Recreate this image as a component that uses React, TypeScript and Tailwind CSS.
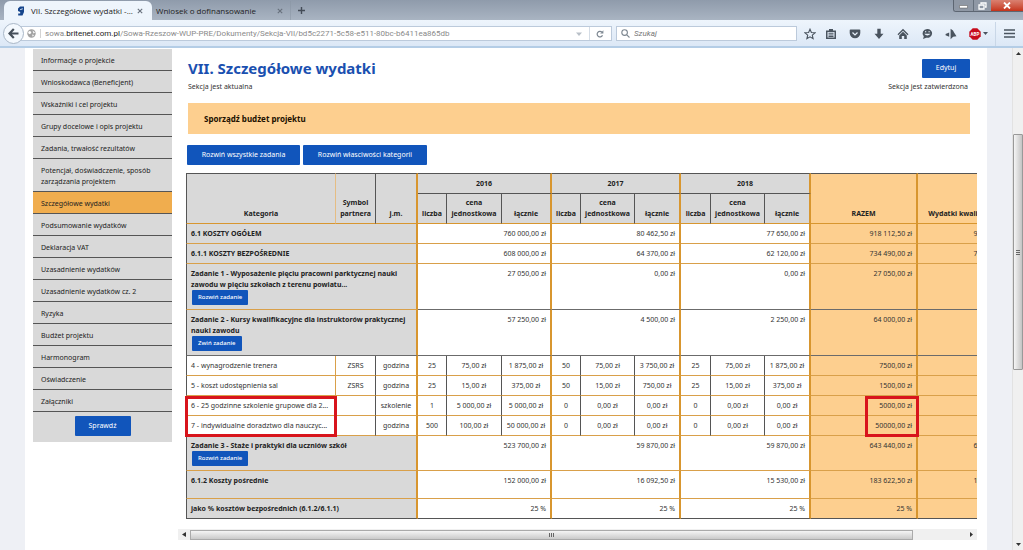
import { ReactNode } from "react"

const sections = [
  "Informacje o projekcie",
  "Wnioskodawca (Beneficjent)",
  "Wskaźniki i cel projektu",
  "Grupy docelowe i opis projektu",
  "Zadania, trwałość rezultatów",
  "Potencjał, doświadczenie, sposób zarządzania projektem",
  "Szczegółowe wydatki",
  "Podsumowanie wydatków",
  "Deklaracja VAT",
  "Uzasadnienie wydatków",
  "Uzasadnienie wydatków cz. 2",
  "Ryzyka",
  "Budżet projektu",
  "Harmonogram",
  "Oświadczenie",
  "Załączniki",
]

const years = ["2016", "2017", "2018"]

type Summary = {
  title: string
  button?: string
  height: string
  totals: string[]
  line: string
  titleLine?: string
}

const summaryTop: Summary[] = [
  { title: "6.1 KOSZTY OGÓŁEM", height: "h-[20px]", totals: ["760 000,00 zł", "80 462,50 zł", "77 650,00 zł", "918 112,50 zł", "918 112,50 zł"], line: "border-b-[#d9a04a]" },
  { title: "6.1.1 KOSZTY BEZPOŚREDNIE", height: "h-[20px]", totals: ["608 000,00 zł", "64 370,00 zł", "62 120,00 zł", "734 490,00 zł", "734 490,00 zł"], line: "border-b-[#d9a04a]" },
  { title: "Zadanie 1 - Wyposażenie pięciu pracowni parktycznej nauki zawodu w pięciu szkołach z terenu powiatu...", button: "Rozwiń zadanie", height: "h-[46px]", totals: ["27 050,00 zł", "0,00 zł", "0,00 zł", "27 050,00 zł", "27 050,00 zł"], line: "border-b-[#6b6b6b]", titleLine: "border-b-[#d9a04a]" },
  { title: "Zadanie 2 - Kursy kwalifikacyjne dla instruktorów praktycznej nauki zawodu", button: "Zwiń zadanie", height: "h-[46px]", totals: ["57 250,00 zł", "4 500,00 zł", "2 250,00 zł", "64 000,00 zł", "64 000,00 zł"], line: "border-b-[#6b6b6b]" },
]

const summaryBottom: Summary[] = [
  { title: "Zadanie 3 - Staże i praktyki dla uczniów szkół", button: "Rozwiń zadanie", height: "h-[35px]", totals: ["523 700,00 zł", "59 870,00 zł", "59 870,00 zł", "643 440,00 zł", "643 440,00 zł"], line: "border-b-[#d9a04a]" },
  { title: "6.1.2 Koszty pośrednie", height: "h-[28px]", totals: ["152 000,00 zł", "16 092,50 zł", "15 530,00 zł", "183 622,50 zł", "183 622,50 zł"], line: "border-b-[#d9a04a]" },
  { title: "jako % kosztów bezpośrednich (6.1.2/6.1.1)", height: "h-[20px]", totals: ["25 %", "25 %", "25 %", "25 %", ""], line: "border-b-[#555]" },
]

const items = [
  { name: "4 - wynagrodzenie trenera", partner: "ZSRS", unit: "godzina", cells: ["25", "75,00 zł", "1 875,00 zł", "50", "75,00 zł", "3 750,00 zł", "25", "75,00 zł", "1 875,00 zł"], total: "7500,00 zł" },
  { name: "5 - koszt udostępnienia sal", partner: "ZSRS", unit: "godzina", cells: ["25", "15,00 zł", "375,00 zł", "50", "15,00 zł", "750,00 zł", "25", "15,00 zł", "375,00 zł"], total: "1500,00 zł" },
  { name: "6 - 25 godzinne szkolenie grupowe dla 2...", partner: "", unit: "szkolenie", cells: ["1", "5 000,00 zł", "5 000,00 zł", "0", "0,00 zł", "0,00 zł", "0", "0,00 zł", "0,00 zł"], total: "5000,00 zł", marked: true },
  { name: "7 - indywidualne doradztwo dla nauczyc...", partner: "", unit: "godzina", cells: ["500", "100,00 zł", "50 000,00 zł", "0", "0,00 zł", "0,00 zł", "0", "0,00 zł", "0,00 zł"], total: "50000,00 zł" },
]

function BlueButton({ children, className = "" }: { children: ReactNode; className?: string }) {
  return (
    <button className={`rounded-[1px] bg-[#1155bb] text-center whitespace-nowrap text-white ${className}`}>
      {children}
    </button>
  )
}

function TabStrip() {
  return (
    <div className="flex h-[20px] items-end bg-gradient-to-b from-[#8f9bab] to-[#a9b4c2] font-['Open_Sans',sans-serif] text-[8px] text-[#222]">
      <div className="ml-[4px] flex h-[19px] w-[148px] items-center rounded-t-[6px] bg-[#eef5fc] pr-[9px] pl-[13px]">
        <svg className="h-[10px] w-[8px] shrink-0" viewBox="0 0 8 10">
          <path d="M3 .5h4v5.5L5.5 9.5H1.2V7.6h2V6L1 5V2.5z" fill="#17468c" />
          <path d="M3.2 3.6l2.6-.8" stroke="#eef5fc" strokeWidth=".9" />
        </svg>
        <span className="ml-[6px] flex-1 whitespace-nowrap">VII. Szczegółowe wydatki -...</span>
        <Cross />
      </div>
      <div className="flex h-[19px] w-[131px] items-center pl-[4px]">
        <span className="flex-1 whitespace-nowrap">Wniosek o dofinansowanie</span>
        <Cross />
      </div>
      <div className="ml-[7px] flex h-[19px] items-center border-l border-[#8893a2]/50 pl-[7px]">
        <svg className="h-[7px] w-[7px]" viewBox="0 0 7 7">
          <path d="M3.5 0v7M0 3.5h7" stroke="#444c57" strokeWidth="1.4" />
        </svg>
      </div>
      <div className="mb-auto ml-auto flex h-[12px] overflow-hidden rounded-bl-[3px] border-b border-l border-[#5d6672]">
        <button aria-label="Minimalizuj" className="flex w-[19px] items-end justify-center bg-[#8f98a5] pb-[2px]">
          <svg className="h-[4px] w-[9px]" viewBox="0 0 9 4">
            <path d="M.5 .5h8v2.5h-8z" fill="#fff" stroke="#555" strokeWidth=".5" />
          </svg>
        </button>
        <button aria-label="Przywróć" className="flex w-[18px] items-center justify-center border-l border-[#66707c] bg-[#8f98a5]">
          <svg className="h-[8px] w-[9px]" viewBox="0 0 9 8">
            <path d="M3 2V1h5v4H7M1 3h5v4H1z" fill="none" stroke="#fff" strokeWidth="1.3" />
          </svg>
        </button>
        <button aria-label="Zamknij" className="flex w-[32px] items-center justify-center bg-gradient-to-b from-[#d98070] to-[#c53219]">
          <svg className="h-[7px] w-[8px]" viewBox="0 0 8 7">
            <path d="M1 .5l6 6M7 .5l-6 6" stroke="#fff" strokeWidth="1.8" />
          </svg>
        </button>
      </div>
    </div>
  )
}

function Cross() {
  return (
    <svg className="h-[6px] w-[6px] shrink-0" viewBox="0 0 6 6">
      <path d="M.8.8l4.4 4.4M5.2.8L.8 5.2" stroke="#67707c" strokeWidth="1.1" />
    </svg>
  )
}

function ToolIcon({ children }: { children: ReactNode }) {
  return (
    <svg className="h-[12px] w-[12px]" viewBox="0 0 12 12" fill="#4a545f">
      {children}
    </svg>
  )
}

function AddressBar() {
  return (
    <div className="relative flex h-[28px] items-center border-b-2 border-[#b4cde6] bg-gradient-to-b from-[#eef5fc] to-[#dce8f6] pt-[1px] font-['Roboto',sans-serif] text-[8px]">
      <button aria-label="Wstecz" className="absolute left-[3px] z-10 flex h-[21px] w-[21px] items-center justify-center rounded-full border border-[#a9b7c7] bg-[#f4f9fe]">
        <svg className="h-[11px] w-[11px]" viewBox="0 0 11 11">
          <path d="M5.8 1L1.5 5.5 5.8 10M2 5.5h8.5" fill="none" stroke="#454f5a" strokeWidth="2.2" />
        </svg>
      </button>
      <div className="ml-[20px] flex h-[15px] flex-1 items-center border border-[#bccadb] bg-white pl-[6px] text-[#8a8a8a]">
        <svg className="h-[9px] w-[9px]" viewBox="0 0 9 9">
          <circle cx="4.5" cy="4.5" r="4.2" fill="#a3a3a3" />
          <path d="M2 2l2 .4.3 1.6-1.6 1.3L1 4zM5.5 1.5L8 3.5 6.5 4.4zM5 5.5l2 .4-1.2 1.8z" fill="#fff" />
        </svg>
        <span className="ml-[4px] h-[9px] w-px bg-[#d3d3d3]" />
        <span className="ml-[4px] flex-1 whitespace-nowrap">
          sowa.<span className="text-[#222]">britenet.com.pl</span>/Sowa-Rzeszow-WUP-PRE/Dokumenty/Sekcja-VII/bd5c2271-5c58-e511-80bc-b6411ea865db
        </span>
        <svg className="h-[4px] w-[6px]" viewBox="0 0 6 4">
          <path d="M0 .5h6L3 4z" fill="#b9c0c8" />
        </svg>
        <span className="ml-[7px] h-[13px] w-px bg-[#d5dde6]" />
        <svg className="mr-[7px] ml-[6px] h-[8px] w-[8px]" viewBox="0 0 8 8">
          <path d="M6.5 5.3A2.8 2.8 0 1 1 6 2.2" fill="none" stroke="#7d8791" strokeWidth="1.2" />
          <path d="M7.4.3v3.2H4.2z" fill="#7d8791" />
        </svg>
      </div>
      <div className="ml-[4px] flex h-[15px] w-[181px] items-center border border-[#bccadb] bg-white pl-[4px]">
        <svg className="h-[9px] w-[9px]" viewBox="0 0 9 9">
          <path d="M5.8 5.8l2.7 2.7M6.4 3.6a2.8 2.8 0 1 1-5.6 0 2.8 2.8 0 0 1 5.6 0z" fill="none" stroke="#7c8690" strokeWidth="1.1" />
        </svg>
        <input aria-label="Szukaj" placeholder="Szukaj" className="ml-[4px] min-w-0 flex-1 italic placeholder:text-[#777]" />
      </div>
      <div className="ml-[7px] flex items-center">
        <ToolIcon>
          <path d="M6 1.2l1.4 3.3 3.6.3-2.7 2.4.8 3.5L6 8.8l-3.1 1.9.8-3.5L1 4.8l3.6-.3z" fill="none" stroke="#4a545f" strokeWidth="1.1" />
        </ToolIcon>
        <div className="ml-[9px] flex gap-[12px]">
          <ToolIcon>
            <path d="M4 1h4v1.5h3V11H1V2.5h3zM2.5 4v5.5h7V4z" fillRule="evenodd" />
            <path d="M3.5 4.8h5v1h-5zM3.5 6.5h5v1h-5zM3.5 8.1h5v.8h-5z" />
          </ToolIcon>
          <ToolIcon>
            <path d="M1.5 1.5h9q.8 0 .8.8V5A5.3 5.3 0 0 1 .7 5V2.3q0-.8.8-.8z" />
            <path d="M3.5 4.5L6 6.9l2.5-2.4" fill="none" stroke="#e6eff9" strokeWidth="1.3" />
          </ToolIcon>
          <ToolIcon>
            <path d="M4.3.8h3.4v5h2.8L6 11 1.5 5.8h2.8z" />
          </ToolIcon>
          <ToolIcon>
            <path d="M6 .8L11.5 6.3l-.9.9L6 2.8 1.4 7.2l-.9-.9zM6 3.8l3.8 3.6V11H7.2V8H4.8v3H2.2V7.4z" />
          </ToolIcon>
          <ToolIcon>
            <path d="M6.3 1a4.8 4.4 0 1 1-1 8.7L2 11l.8-2.6A4.6 4.4 0 0 1 6.3 1z" />
            <path d="M3.2 5.8q3 3.6 6.4 0z" fill="#e6eff9" />
            <path d="M4.7 3v1.4M8.1 3v1.4" fill="none" stroke="#e6eff9" strokeWidth="1" />
          </ToolIcon>
          <ToolIcon>
            <path d="M5.6.8q3 1.6 3.6 4l2.3 3.4-3.4.6-2.5 2.4z" />
            <path d="M4.2 4.6v4.2L.6 7.2V6z" />
          </ToolIcon>
        </div>
        <svg className="ml-[12px] h-[12px] w-[12px]" viewBox="0 0 12 12">
          <path d="M3.7.3h4.6l3.4 3.4v4.6l-3.4 3.4H3.7L.3 8.3V3.7z" fill="#c70d1c" />
          <text x="6" y="7.8" textAnchor="middle" fontSize="4.5" fontWeight="700" fill="#fff">ABP</text>
        </svg>
        <svg className="ml-[2px] h-[3px] w-[5px]" viewBox="0 0 5 3">
          <path d="M0 0h5L2.5 3z" fill="#4a545f" />
        </svg>
        <span className="ml-[7px] h-[24px] w-px bg-[#c9d7e7]" />
        <svg className="mr-[8px] ml-[8px] h-[9px] w-[11px]" viewBox="0 0 11 9">
          <path d="M0 1h11M0 4.5h11M0 8h11" stroke="#4a545f" strokeWidth="1.7" />
        </svg>
      </div>
    </div>
  )
}

function Sidebar() {
  return (
    <aside className="mt-[1px] w-[139px] shrink-0 self-start bg-[#d9d9d9] pb-[6px] text-[#222]">
      <nav>
        {sections.map((name) => (
          <a
            key={name}
            href="#"
            className={`block border-b border-[#555] px-[8px] pt-[6px] pb-[4px] leading-[11px] ${name === "Szczegółowe wydatki" ? "bg-[#f0ad4e]" : ""}`}
          >
            {name}
          </a>
        ))}
      </nav>
      <BlueButton className="mx-auto mt-[4px] block h-[20px] w-[56px]">Sprawdź</BlueButton>
    </aside>
  )
}

function SummaryRow({ row }: { row: Summary }) {
  return (
    <tr className={row.height}>
      <th
        colSpan={3}
        className={`border-r-2 border-b border-l border-r-[#d8962f] border-l-[#555] bg-[#d9d9d9] px-[4px] pt-[4px] text-left align-top text-[#222] ${row.titleLine ?? row.line}`}
      >
        {row.title}
        {row.button && <BlueButton className="ml-[1px] block h-[15px] px-[6px] text-[6px] font-medium">{row.button}</BlueButton>}
      </th>
      {row.totals.map((value, i) => (
        <td
          key={i}
          colSpan={i < 3 ? 3 : 1}
          className={`border-r-2 border-b border-r-[#d8962f] px-[4px] pt-[4px] text-right align-top ${row.line} ${i > 2 ? "bg-[#fdcf8f]" : ""}`}
        >
          {value}
        </td>
      ))}
    </tr>
  )
}

function BudgetTable() {
  return (
    <table className="w-[836px] table-fixed border-separate border-spacing-0 leading-[11px] whitespace-normal text-[#333]">
      <colgroup>
        <col className="w-[150px]" />
        <col className="w-[40px]" />
        <col className="w-[42px]" />
        <col className="w-[29px]" />
        <col className="w-[55px]" />
        <col className="w-[50px]" />
        <col className="w-[29px]" />
        <col className="w-[54px]" />
        <col className="w-[46px]" />
        <col className="w-[30px]" />
        <col className="w-[54px]" />
        <col className="w-[46px]" />
        <col className="w-[107px]" />
        <col className="w-[104px]" />
      </colgroup>
      <thead className="bg-[#d9d9d9] text-[#222]">
        <tr className="h-[21px]">
          <th rowSpan={2} className="border border-[#555] border-r-[#e5bd84] border-b-[#d8962f] pb-[4px] align-bottom">Kategoria</th>
          <th rowSpan={2} className="border-t border-r border-b border-[#555] border-b-[#d8962f] pb-[4px] align-bottom">Symbol partnera</th>
          <th rowSpan={2} className="border-t border-r-2 border-b border-[#555] border-r-[#d8962f] border-b-[#d8962f] pb-[4px] align-bottom">j.m.</th>
          {years.map((year) => (
            <th key={year} colSpan={3} className="border-t border-r-2 border-b border-[#555] border-r-[#d8962f]">{year}</th>
          ))}
          <th rowSpan={2} className="border-t border-r-2 border-b border-[#555] border-r-[#d8962f] border-b-[#d8962f] bg-[#fdcf8f] pb-[4px] align-bottom">RAZEM</th>
          <th rowSpan={2} className="border-t border-b border-[#555] border-b-[#d8962f] bg-[#fdcf8f] pb-[4px] align-bottom whitespace-nowrap">Wydatki kwalifikowalne</th>
        </tr>
        <tr className="h-[30px]">
          {years.flatMap((year) => [
            <th key={year + "n"} className="border-r border-b border-[#555] border-b-[#d8962f] pb-[4px] align-bottom">liczba</th>,
            <th key={year + "c"} className="border-r border-b border-[#555] border-b-[#d8962f] pb-[4px] align-bottom">cena jednostkowa</th>,
            <th key={year + "t"} className="border-r-2 border-b border-[#d8962f] pb-[4px] align-bottom">łącznie</th>,
          ])}
        </tr>
      </thead>
      <tbody>
        {summaryTop.map((row) => <SummaryRow key={row.title} row={row} />)}
        {items.map((item) => (
          <tr key={item.name} className="h-[20px] text-center whitespace-nowrap">
            <td className="relative border-r border-b border-l border-[#d9a04a] border-l-[#555] pl-[4px] text-left">
              {item.name}
              {item.marked && <span className="absolute top-0 left-[-2px] z-10 h-[41px] w-[152px] border-[3px] border-[#d8141c]" />}
            </td>
            <td className="border-r border-b border-[#555] border-b-[#d9a04a]">{item.partner}</td>
            <td className="border-r-2 border-b border-[#d8962f] border-b-[#d9a04a]">{item.unit}</td>
            {item.cells.map((value, i) => (
              <td
                key={i}
                className={`border-b border-b-[#d9a04a] ${i % 3 === 2 ? "border-r-2 border-r-[#d8962f]" : "border-r border-r-[#555]"}`}
              >
                {value}
              </td>
            ))}
            <td className="relative border-r-2 border-b border-r-[#d8962f] border-b-[#d9a04a] bg-[#fdcf8f] pr-[4px] text-right">
              {item.total}
              {item.marked && <span className="absolute top-0 right-[-3px] z-10 h-[41px] w-[54px] border-[3px] border-[#d8141c]" />}
            </td>
            <td className="border-b border-[#d9a04a] bg-[#fdcf8f]" />
          </tr>
        ))}
        {summaryBottom.map((row) => <SummaryRow key={row.title} row={row} />)}
      </tbody>
    </table>
  )
}

function HorizontalScroll() {
  return (
    <div className="mt-[10px] flex h-[11px] items-center bg-[#f0f0f0]">
      <svg className="mx-[4px] h-[5px] w-[4px]" viewBox="0 0 4 5">
        <path d="M4 0v5L0 2.5z" fill="#333" />
      </svg>
      <div className="flex h-[10px] flex-1 items-center justify-center gap-[1px] border border-[#aaa] bg-gradient-to-b from-[#f5f5f5] to-[#cacaca]">
        <span className="h-[4px] w-px bg-[#666]" />
        <span className="h-[4px] w-px bg-[#666]" />
        <span className="h-[4px] w-px bg-[#666]" />
      </div>
      <svg className="mr-[4px] ml-[57px] h-[5px] w-[3px]" viewBox="0 0 3 5">
        <path d="M0 0v5l3-2.5z" fill="#333" />
      </svg>
    </div>
  )
}

function VerticalScroll() {
  return (
    <div className="flex w-[11px] shrink-0 flex-col items-center border-l border-[#e2e2e2] bg-[#f0f0f0] py-[4px]">
      <svg className="h-[3px] w-[5px]" viewBox="0 0 5 3">
        <path d="M0 3h5L2.5 0z" fill="#333" />
      </svg>
      <div className="mt-[79px] flex h-[236px] w-full flex-col items-center justify-center gap-[1px] rounded-[1px] border border-[#999] bg-gradient-to-r from-[#f5f5f5] to-[#c4c4c4]">
        <span className="h-px w-[4px] bg-[#666]" />
        <span className="h-px w-[4px] bg-[#666]" />
        <span className="h-px w-[4px] bg-[#666]" />
      </div>
      <svg className="mt-auto h-[3px] w-[5px]" viewBox="0 0 5 3">
        <path d="M0 0h5L2.5 3z" fill="#333" />
      </svg>
    </div>
  )
}

export default function App() {
  return (
    <div className="flex h-screen flex-col overflow-hidden bg-[#eef0f5]">
      <TabStrip />
      <AddressBar />
      <div className="flex min-h-0 flex-1">
        <div className="mr-[25px] ml-[25px] flex min-w-0 flex-1 bg-white pl-[8px] font-['Noto_Sans',sans-serif] text-[7px]">
          <Sidebar />
          <main className="min-w-0 flex-1 pr-[10px] pl-[6px] text-[#333]">
            <div className="pr-[7px] pl-[10px]">
              <div className="flex h-[41px] items-end justify-between pb-[11px]">
                <h1 className="text-[15px] leading-[20px] font-bold text-[#1a50b0]">VII. Szczegółowe wydatki</h1>
                <BlueButton className="h-[19px] w-[48px]">Edytuj</BlueButton>
              </div>
              <div className="mt-[-8px] flex justify-between pr-[2px] leading-[12px]">
                <span>Sekcja jest aktualna</span>
                <span>Sekcja jest zatwierdzona</span>
              </div>
              <div className="mt-[10px] flex h-[31px] items-center bg-[#fdcf8f] pl-[16px] text-[8px] font-bold text-[#221100]">
                Sporządź budżet projektu
              </div>
            </div>
            <div className="mt-[11px] flex gap-[3px] pl-[9px]">
              <BlueButton className="h-[20px] w-[113px]">Rozwiń wszystkie zadania</BlueButton>
              <BlueButton className="h-[20px] w-[124px]">Rozwiń własciwości kategorii</BlueButton>
            </div>
            <div className="ml-[6px] overflow-hidden pt-[8px] pl-[2px]">
              <BudgetTable />
            </div>
            <HorizontalScroll />
          </main>
        </div>
        <VerticalScroll />
      </div>
    </div>
  )
}
